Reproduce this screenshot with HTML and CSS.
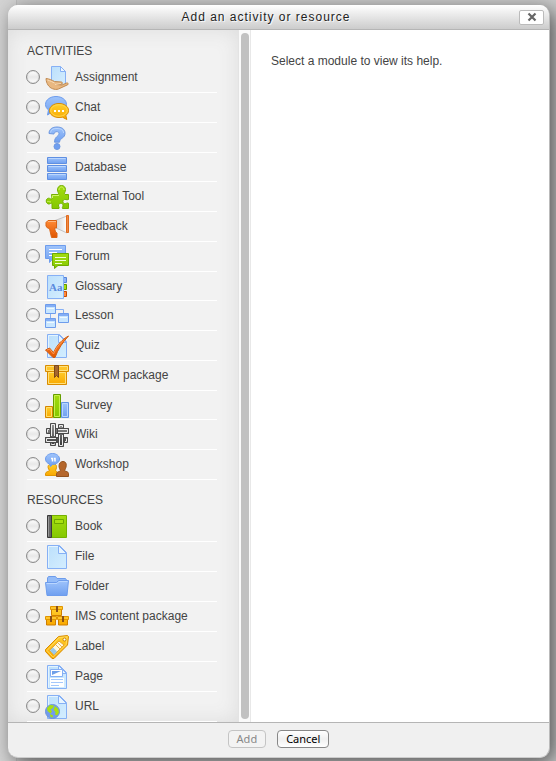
FILE: index.html
```html
<!DOCTYPE html>
<html lang="en">
<head>
    <meta charset="UTF-8">
    <meta name="viewport" content="width=device-width, initial-scale=1.0">
    <title>Add an activity or resource</title>
    <link rel="stylesheet" href="styles.css">
</head>
<body>
    <!-- shared gradients and shapes -->
    <svg class="defs" width="0" height="0" aria-hidden="true">
        <defs>
            <linearGradient id="blue" x1="0" y1="0" x2="0" y2="1"><stop offset="0" stop-color="#9fc4fb"/><stop offset="1" stop-color="#6f9ff0"/></linearGradient>
            <linearGradient id="sheet" x1="0" y1="0" x2="1" y2="1"><stop offset="0" stop-color="#bbdffb"/><stop offset="1" stop-color="#d4eeff"/></linearGradient>
            <linearGradient id="green" x1="0" y1="0" x2="0" y2="1"><stop offset="0" stop-color="#a4dc10"/><stop offset="1" stop-color="#84c800"/></linearGradient>
            <linearGradient id="gold" x1="0" y1="0" x2="0" y2="1"><stop offset="0" stop-color="#ffcf2e"/><stop offset="1" stop-color="#f9a800"/></linearGradient>
            <linearGradient id="orange" x1="0" y1="0" x2="0" y2="1"><stop offset="0" stop-color="#ff8a35"/><stop offset="1" stop-color="#e05500"/></linearGradient>
            <linearGradient id="horn" x1="0" y1="0" x2="1" y2="0"><stop offset="0" stop-color="#cfcfcf"/><stop offset="1" stop-color="#ffffff"/></linearGradient>
            <linearGradient id="steel" x1="0" y1="0" x2="0" y2="24" gradientUnits="userSpaceOnUse"><stop offset="0" stop-color="#999"/><stop offset="1" stop-color="#333"/></linearGradient>
            <symbol id="page" viewBox="0 0 24 24">
                <path d="M2.500.5h12l7 7v16h-19z" fill="url(#sheet)" stroke="#86b0f5"/>
                <path d="M3.500 22.500V1.500h10" fill="none" stroke="#e4f4ff"/>
                <path d="M13.500.5v8h8z" fill="#e8f5ff" stroke="#86b0f5"/>
            </symbol>
            <symbol id="crate" viewBox="0 0 24 24">
                <path d="M2.500 6h19v14.500h-19z" fill="url(#gold)" stroke="#d98c00"/>
                <path d="M.5 1.500h23v6H.5z" fill="#ffc52a" stroke="#d98c00"/>
                <path d="M1.500 2.500h21v4h-21zM3.500 19.500V8.500h17v11z" fill="none" stroke="#ffe07a"/>
                <path d="M9.500 1.500h4v12l-2-2-2 2z" fill="#a5662e" stroke="#7d4718"/>
            </symbol>
        </defs>
    </svg>

    <form class="dialog">
        <header class="dialog-header">
            <h1>Add an activity or resource</h1>
            <button type="button" class="close" aria-label="Close">
                <svg width="10" height="10" viewBox="0 0 10 10"><path d="M1.500 1.500l7 7M8.500 1.500l-7 7" stroke="#666" stroke-width="2.200"/></svg>
            </button>
        </header>

        <div class="dialog-body">
            <div class="options">
                <h2>ACTIVITIES</h2>
                <ul class="modules activities">
                    <li><label><input type="radio" name="module">
                        <svg class="icon" viewBox="0 0 24 24">
                            <path d="M6.500.5h9l5 5v14h-14z" fill="url(#sheet)" stroke="#86b0f5"/>
                            <path d="M15.500.5v5h5z" fill="#eef8ff" stroke="#86b0f5"/>
                            <path d="M1 12.500c3 .3 6 1.500 8.500 3l7 .5c1.500.5 1 2-.5 2.300l-5 .2 6 .5 4.500-2c1.500-.3 2.300.8 1.300 1.700L13.500 23c-2 .8-4 .4-6-.3C4 21.500 1.200 17.500 1 12.500z" fill="#e9b881" stroke="#c08a52"/>
                            <path d="M2.500 14c3 1 5 2 7 3M10 18.500l6-1" fill="none" stroke="#f8dbb5"/>
                        </svg>Assignment</label></li>
                    <li><label><input type="radio" name="module">
                        <svg class="icon" viewBox="0 0 24 24">
                            <path d="M11 .5c6 0 10.500 3.500 10.500 8s-4.500 8-10.500 8l-4-.5-4.500 3 1-5C1.500 12.500.5 10.500.5 8.500.5 4 5 .5 11 .5z" fill="url(#blue)" stroke="#6d9cec"/>
                            <path d="M14 7.500c5.500 0 9.500 3 9.500 7 0 2-1 3.800-2.700 5l1 4-4.300-2.300-3.500.3c-5.500 0-9.500-3-9.500-7s4-7 9.500-7z" fill="url(#gold)" stroke="#d98a00"/>
                            <ellipse cx="14" cy="14.500" rx="8.300" ry="5.800" fill="none" stroke="#ffd84e"/>
                            <path d="M9 14h2v2H9zM13 14h2v2h-2zM17 14h2v2h-2z" fill="#fff"/>
                        </svg>Chat</label></li>
                    <li><label><input type="radio" name="module">
                        <svg class="icon" viewBox="0 0 24 24">
                            <path d="M4 7.500c0-4.500 3.500-6.500 8-6.500s8 2 8 6.200c0 5.300-5 4.300-5.500 9h-5c0-6 4.500-5.700 4.500-8.700 0-2.700-5-2.500-5 .5z" fill="url(#blue)" stroke="#7099e0"/>
                            <path d="M5.500 6.500C6.500 3 9 2.500 12 2.500s6.500 1 6.500 4.500" fill="none" stroke="#bcd7ff"/>
                            <circle cx="12" cy="20.500" r="3" fill="#6f9ff0" stroke="#7099e0"/>
                        </svg>Choice</label></li>
                    <li><label><input type="radio" name="module">
                        <svg class="icon" viewBox="0 0 24 24">
                            <g fill="url(#blue)" stroke="#5f8fe2"><path d="M2.500 1.500h19v6h-19z"/><path d="M2.500 9.500h19v6h-19z"/><path d="M2.500 17.500h19v6h-19z"/></g>
                            <path d="M3.500 2.500h17M3.500 10.500h17M3.500 18.500h17" stroke="#b9d6ff"/>
                        </svg>Database</label></li>
                    <li><label><input type="radio" name="module">
                        <svg class="icon" viewBox="0 0 24 24">
                            <path d="M6.500 9.500h6.500c1.500-1-.5-2-.5-4.500 0-2.700 1.500-4.500 4-4.500s4 1.800 4 4.200c0 2.500-2 3.800-.5 4.800h3.500v5c-2 1-3.500-1-5 .5-1.500 1.700 0 4 2 3.500 1.500-.3 2-1 3-.2v5.200h-6c-.8-1 1-2 .5-3.500-.5-2.200-4-2.200-4.500 0-.3 1.500 1.200 2.500.5 3.500h-7v-5c-1-1-2 .8-3.500.5-3-.6-3-5.500 0-5.800 1.500-.2 2.500 1.500 3.500.5z" fill="url(#green)" stroke="#74b000"/>
                            <path d="M7.500 13v-2.500h6.500M14 5c0-4 5-4 5 0M2 17c1-1.500 2 0 4 0" fill="none" stroke="#d1f568"/>
                        </svg>External Tool</label></li>
                    <li><label><input type="radio" name="module">
                        <svg class="icon" viewBox="0 0 24 24">
                            <path d="M10 5.500L22 1v17L10 12.500z" fill="url(#horn)" stroke="#c4c4c4"/>
                            <path d="M21.500.5h2v17h-2z" fill="#f08a45" stroke="#e06a1d"/>
                            <path d="M1 7.500l2-2h8.500v7.500H9.500l1 4 1.500 1v4.500H6.500l-2-9-2-.5-1.500-2z" fill="url(#orange)" stroke="#d96414"/>
                            <path d="M3 6.500h8" stroke="#ffb77f"/>
                        </svg>Feedback</label></li>
                    <li><label><input type="radio" name="module">
                        <svg class="icon" viewBox="0 0 24 24">
                            <path d="M.5.5h20v13H8l-3.500 4v-4h-4z" fill="url(#blue)" stroke="#6d9cec"/>
                            <path d="M4 4.500h13M4 7.500h8M4 10.500h5" stroke="#fff"/>
                            <path d="M7.500 8.500h16v12H13l-3.500 3v-3h-2z" fill="url(#green)" stroke="#6eaa00"/>
                            <path d="M10 12.500h11M10 15.500h11M10 18.500h7" stroke="#f0ffd0"/>
                        </svg>Forum</label></li>
                    <li><label><input type="radio" name="module">
                        <svg class="icon" viewBox="0 0 24 24">
                            <path d="M17.500 2.500h4v5h-4z" fill="#8cb4f7" stroke="#5584d8"/>
                            <path d="M17.500 9.500h4v5h-4z" fill="#a8e010" stroke="#609500"/>
                            <path d="M17.500 16.500h4v5h-4z" fill="#ff893c" stroke="#c94b00"/>
                            <path d="M2.500.5h16v23h-16z" fill="url(#sheet)" stroke="#86b0f5"/>
                            <text x="4" y="16" class="glyph">Aa</text>
                        </svg>Glossary</label></li>
                    <li><label><input type="radio" name="module">
                        <svg class="icon" viewBox="0 0 24 24">
                            <path d="M11 5.500h7.500V10M5.500 9v6" fill="none" stroke="#86b0f5"/>
                            <path d="M.5.500h10v9H.5zM13.500 9.500h10v9h-10zM.5 14.500h10v9H.5z" fill="#c8e6ff" stroke="#6d9cec"/>
                            <path d="M1 2h9M14 11h9M1 16h9" stroke="#84aef5" stroke-width="2"/>
                            <path d="M2 4.500h7M15 13.500h7M2 18.500h7" stroke="#f0f9ff"/>
                        </svg>Lesson</label></li>
                    <li><label><input type="radio" name="module">
                        <svg class="icon" viewBox="0 0 24 24">
                            <use href="#page"/>
                            <path d="M.5 16l4-2 4 4.500C12 11 17 5.500 23.500 2 18 8 13 15 10 23.500H8z" fill="url(#orange)" stroke="#cf5c10"/>
                            <path d="M2 16l2.500-1 4 5c2-5 5-9 9-13" fill="none" stroke="#ff9650"/>
                        </svg>Quiz</label></li>
                    <li><label><input type="radio" name="module">
                        <svg class="icon" viewBox="0 0 24 24"><use href="#crate"/></svg>SCORM package</label></li>
                    <li><label><input type="radio" name="module">
                        <svg class="icon" viewBox="0 0 24 24">
                            <path d="M.5 12.500h7v11h-7z" fill="url(#gold)" stroke="#d58600"/>
                            <path d="M16.500 8.500h7v15h-7z" fill="url(#blue)" stroke="#6594e4"/>
                            <path d="M8.500.5h7v23h-7z" fill="url(#green)" stroke="#659d00"/>
                            <path d="M1.500 22.500v-9h5v9z" fill="none" stroke="#ffe06a"/>
                            <path d="M9.500 22.500v-21h5v21z" fill="none" stroke="#c8f04a"/>
                            <path d="M17.500 22.500v-13h5v13z" fill="none" stroke="#b9d6ff"/>
                        </svg>Survey</label></li>
                    <li><label><input type="radio" name="module">
                        <svg class="icon" viewBox="0 0 24 24">
                            <!-- horizontal bars, then the vertical ones woven over them -->
                            <g fill="url(#steel)" stroke="#4a4a4a">
                                <path d="M1.500 5.500h22v5h-22z"/>
                                <path d="M.5 14.500h22v5h-22z"/>
                                <path d="M5.500.5h5v22h-5z"/>
                                <path d="M13.500 1.500h5v22h-5z"/>
                                <path d="M12.500 5.500h11v5h-11z"/>
                                <path d="M.5 14.500h11v5H.5z"/>
                            </g>
                            <path d="M6.500 13v-11.500h3V13M14.500 12v10.500h3V12M13 6.500h9.500v3H13M11 15.500H1.500v3H11M14.500 4V2.500h3V4M6.500 20.500v1h3v-1M2.500 9.500v-3H4M21.500 15.500v3H20" fill="none" stroke="#eee"/>
                        </svg>Wiki</label></li>
                    <li><label><input type="radio" name="module">
                        <svg class="icon" viewBox="0 0 24 24">
                            <path d="M.5 22.500v-2c.5-2 3-2 4-3-3-4-1-7 3-7s5 3 3 7c1 1 2 1 2 3v2z" fill="url(#gold)" stroke="#e09500"/>
                            <path d="M11.500 23.500v-3c.5-2 3.500-2 4-3-3-5-1-9 2.500-9s4.500 4 1.500 9c1 1 4 1 4 3v3z" fill="#b5672c" stroke="#94531f"/>
                            <path d="M7.500.5c4 0 7 2.500 7 5.500s-3 5.500-7 5.500l-2 2-1-2.500c-2.500-1-4-2.500-4-5 0-3 3-5.500 7-5.500z" fill="url(#blue)" stroke="#6d9cec"/>
                            <path d="M6 5.500h1.500v3M9 5.500h1v3" fill="none" stroke="#fff" stroke-width="1.500"/>
                        </svg>Workshop</label></li>
                </ul>

                <h2>RESOURCES</h2>
                <ul class="modules">
                    <li><label><input type="radio" name="module">
                        <svg class="icon" viewBox="0 0 24 24">
                            <path d="M6 .5h15.500v22H6z" fill="url(#green)" stroke="#74b000"/>
                            <path d="M2.500.5h4v22h-4z" fill="#666" stroke="#3a3a3a"/>
                            <path d="M3.500 1.500v20" stroke="#999"/>
                            <path d="M9.500 4.500h9v4h-9z" fill="#a8e010" stroke="#6ca600"/>
                        </svg>Book</label></li>
                    <li><label><input type="radio" name="module">
                        <svg class="icon" viewBox="0 0 24 24"><use href="#page"/></svg>File</label></li>
                    <li><label><input type="radio" name="module">
                        <svg class="icon" viewBox="0 0 24 24">
                            <path d="M2.500 8V3l1-1.500h7L12 3.500h8.500l1 1.500v4h-19z" fill="#94bcf8" stroke="#6d9cec"/>
                            <path d="M.5 7.500h11l2-2h10L22 20.500H2z" fill="url(#blue)" stroke="#6d9cec"/>
                            <path d="M1.500 8.500H12l2-2h8.500" fill="none" stroke="#b9d6ff"/>
                        </svg>Folder</label></li>
                    <li><label><input type="radio" name="module">
                        <svg class="icon" viewBox="0 0 24 24">
                            <path d="M6.500 3.500h10v7h-10zM1.500 13h9v7h-9zM13.500 13h9v7h-9z" fill="url(#gold)" stroke="#cf7f00"/>
                            <path d="M5.500 1.500h12v3h-12zM.5 11.500h11v3H.5zM12.500 11.500h11v3h-11z" fill="#ffc52a" stroke="#e09500"/>
                            <path d="M12 1v6M6 11v6M18 11v6" stroke="#8a5018" stroke-width="2"/>
                        </svg>IMS content package</label></li>
                    <li><label><input type="radio" name="module">
                        <svg class="icon" viewBox="0 0 24 24">
                            <path d="M.5 14.500L13.500 1.500l9-1 1 1-1 8.500L9 23.500H7l-6.500-7z" fill="url(#gold)" stroke="#d98c00"/>
                            <path d="M2 15.500L14 2.700l8-.8-.8 7.600L8 22.300z" fill="none" stroke="#ffd95e"/>
                            <path d="M4.500 15.500l9.500-9.500 5 4L9 20z" fill="#fff8de" stroke="#e5a52e"/>
                            <path d="M5 15.500l3-3 4 4-3 3.500z" fill="#9ac9ea"/>
                            <path d="M11 10l4 4M13 8l4 4" stroke="#e2b45c"/>
                            <circle cx="19.500" cy="4.500" r="1.500" fill="#fff" stroke="#c98200"/>
                        </svg>Label</label></li>
                    <li><label><input type="radio" name="module">
                        <svg class="icon" viewBox="0 0 24 24">
                            <use href="#page"/>
                            <path d="M5.500 4.500h12v7h-12z" fill="#fff" stroke="#86b0f5"/>
                            <path d="M7 10V6h9z" fill="#6f9fe8"/>
                            <path d="M5 13h14v9H5z" fill="#fff"/>
                            <path d="M6 14.500h12M6 17.500h12M6 20.500h8" stroke="#a4c8fb"/>
                        </svg>Page</label></li>
                    <li><label><input type="radio" name="module">
                        <svg class="icon" viewBox="0 0 24 24">
                            <use href="#page"/>
                            <circle cx="7.500" cy="16.500" r="7" fill="#729cec" stroke="#6d92d8"/>
                            <path d="M2 13l3-3 4 .5-1 2.500-2.500 1.500 1.500 2-1.500 2-3-2.500zM10 11l3 2.500 1 4-2 3-2-1 .5-2.500-2-2zM5 19l3 1.500-.5 2-2-.5z" fill="#a8e010"/>
                        </svg>URL</label></li>
                </ul>
            </div>

            <div class="scrollbar"><div class="thumb"></div></div>

            <div class="help">
                <p>Select a module to view its help.</p>
            </div>
        </div>

        <footer class="dialog-footer">
            <button type="submit" disabled>Add</button>
            <button type="button">Cancel</button>
        </footer>
    </form>
</body>
</html>
```
FILE: styles.css
```css
* {
    box-sizing: border-box;
}

body {
    margin: 0;
    padding: 5px 6px 3px 8px;
    min-height: 100vh;
    display: flex;
    background: linear-gradient(to right, #d4d4d4 16px, #bebebe 16px, #bebebe 17px, #cccccc 17px);
    font-family: "Liberation Sans", Arial, sans-serif;
    font-size: 12px;
    color: #444;
}

.defs {
    position: absolute;
}

.dialog {
    flex: 1;
    display: flex;
    flex-direction: column;
    background: #f0f0f0;
    border-right: 1px solid #bbb;
    border-bottom: 1px solid #ccc;
    border-radius: 10px;
    overflow: hidden;
    box-shadow: 5px 5px 20px #555;
}

.dialog-header {
    display: flex;
    align-items: center;
    height: 25px;
    padding-right: 5px;
    background: linear-gradient(#fff, #ccc);
    border-bottom: 1px solid #b5b5b5;
}

h1 {
    flex: 1;
    margin: 0;
    padding-left: 5px;
    font-size: 12px;
    font-weight: normal;
    letter-spacing: 1px;
    text-align: center;
    color: #222;
    text-shadow: 1px 1px 1px #fff;
}

.close {
    display: flex;
    align-items: center;
    justify-content: center;
    width: 25px;
    height: 15px;
    padding: 0;
    background: #fff;
    border: 1px solid #bbb;
    border-radius: 2px;
}

.dialog-body {
    flex: 1;
    display: flex;
    background: #fff;
}

.options {
    width: 230px;
    padding: 13px 21px 0 19px;
    background: #f2f2f2;
    box-shadow: inset 0 0 20px #dcdcdc;
}

h2 {
    margin: 0;
    height: 20px;
    font-size: 12px;
    font-weight: normal;
    line-height: 16px;
}

.modules {
    list-style: none;
    margin: 0;
    padding: 0;
}

.activities {
    margin-bottom: 12px;
}

.modules li {
    height: 30px;
    border-bottom: 1px solid #fff;
}

.activities li:nth-child(4n) {
    height: 29px;
}

.modules label {
    display: flex;
    align-items: center;
    height: 28px;
}

.modules input {
    appearance: none;
    flex: none;
    width: 14px;
    height: 14px;
    margin: 0 5px 0 -1px;
    background: linear-gradient(#fff, #e8e8e8 50%, #fff);
    border: 1px solid #8c8c8c;
    border-radius: 50%;
    box-shadow: inset 0 0 1px #999;
}

.modules input:checked {
    background: radial-gradient(#333 3px, #fff 4px);
}

.icon {
    flex: none;
    width: 24px;
    height: 24px;
    margin: 2px 6px 0 0;
}

.glyph {
    font-family: "Liberation Serif", serif;
    font-size: 11px;
    font-weight: bold;
    fill: #5b8ade;
}

.scrollbar {
    display: flex;
    justify-content: center;
    width: 13px;
    padding: 3px 0;
    background: #fafafa;
    border-left: 1px solid #e3e3e3;
    border-right: 1px solid #e8e8e8;
}

.thumb {
    width: 8px;
    background: #c1c1c1;
    border-radius: 4px;
}

.help {
    flex: 1;
    padding: 22px 20px;
}

.help p {
    margin: 0;
    line-height: 18px;
}

.dialog-footer {
    display: flex;
    justify-content: center;
    gap: 11px;
    height: 35px;
    padding-top: 7px;
    border-top: 1px solid #b5b5b5;
}

.dialog-footer button {
    height: 18px;
    padding: 0 8px;
    font-family: "Noto Sans", sans-serif;
    font-size: 11px;
    line-height: 14px;
    color: #000;
    background: linear-gradient(#fff, #f0f0f0 50%, #fff);
    border: 1px solid #888;
    border-radius: 4px;
}

.dialog-footer button:disabled {
    color: #888;
    background: #f3f3f3;
    border-color: #c4c4c4;
}
```
